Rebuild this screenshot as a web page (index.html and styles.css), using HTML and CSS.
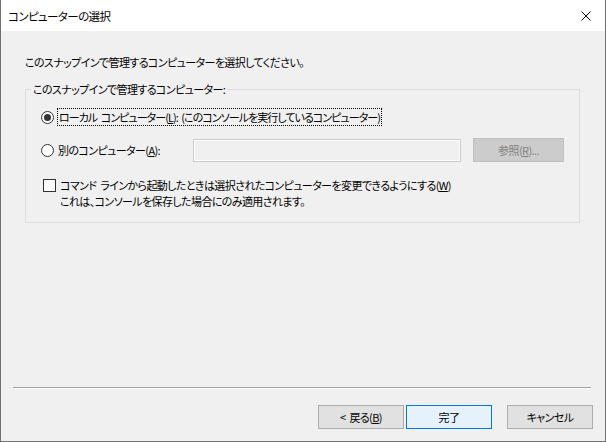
FILE: index.html
```html
<!DOCTYPE html>
<html lang="ja">
<head>
    <meta charset="UTF-8">
    <title>コンピューターの選択</title>
    <link rel="stylesheet" href="styles.css">
</head>
<body>
    <div class="window">
        <!-- タイトルバー -->
        <div class="titlebar">
            <span class="title">コンピューターの選択</span>
            <span class="close">
                <svg width="10" height="10" viewBox="0 0 10 10">
                    <path d="M0.5 0.5 L9.5 9.5 M9.5 0.5 L0.5 9.5" stroke="#000" stroke-width="1" fill="none"/>
                </svg>
            </span>
        </div>

        <div class="content">
            <p class="intro">このスナップインで管理するコンピューターを選択してください。</p>

            <fieldset class="group">
                <legend>このスナップインで管理するコンピューター:</legend>

                <div class="row row-local">
                    <span class="radio checked"></span>
                    <span class="label focus">ローカル コンピューター(<u>L</u>): (このコンソールを実行しているコンピューター)</span>
                </div>

                <div class="row row-other">
                    <span class="radio"></span>
                    <span class="label other-label">別のコンピューター(<u>A</u>):</span>
                    <span class="textbox"></span>
                    <span class="btn disabled">参照(<u>R</u>)...</span>
                </div>

                <div class="row row-check">
                    <span class="checkbox"></span>
                    <span class="label">コマンド ラインから起動したときは選択されたコンピューターを変更できるようにする(<u>W</u>)<br>これは、コンソールを保存した場合にのみ適用されます。</span>
                </div>
            </fieldset>

            <div class="footer">
                <div class="separator"></div>
                <div class="buttons">
                    <span class="btn">&lt; 戻る(<u>B</u>)</span>
                    <span class="btn default">完了</span>
                    <span class="btn cancel">キャンセル</span>
                </div>
            </div>
        </div>
    </div>
</body>
</html>
```

FILE: styles.css
```css
/* 全体 */
body {
    margin: 0;
    font-family: "Noto Sans CJK JP", "Noto Sans", sans-serif;
    font-size: 11px;
    letter-spacing: -0.6px;
    font-feature-settings: "palt";
    color: #000;
    background-color: #f0f0f0;
}

.window {
    width: 606px;
    height: 442px;
    box-sizing: border-box;
    border-left: 1px solid #707070;
    border-right: 1px solid #707070;
    border-bottom: 1px solid #707070;
    display: flex;
    flex-direction: column;
}

/* タイトルバー */
.titlebar {
    height: 31px;
    background-color: #fff;
    display: flex;
    align-items: center;
    justify-content: space-between;
    padding: 0 14px 0 7px;
    flex-shrink: 0;
}

.title {
    font-size: 11.5px;
    line-height: 16px;
}

.close {
    display: flex;
}

/* 本体 */
.content {
    flex: 1;
    display: flex;
    flex-direction: column;
    background-color: #f0f0f0;
    padding: 23px 0 0 24px;
}

.intro {
    margin: 0;
    line-height: 16px;
}

.group {
    margin: 11px 0 0 0;
    width: 555px;
    box-sizing: border-box;
    border: 1px solid #dcdcdc;
    padding: 11px 0 13px 15px;
    min-width: 0;
}

.group legend {
    padding: 0 2px;
    margin-left: -10px;
    line-height: 16px;
}

.row {
    display: flex;
    align-items: center;
}

.label {
    line-height: 16px;
    white-space: nowrap;
}

.row-local .label {
    margin-left: 3px;
}

.focus {
    border: 1px dotted #000;
    padding: 0 1px 0 1px;
    letter-spacing: -0.95px;
    word-spacing: 2px;
}

.row-other {
    margin-top: 12px;
    height: 24px;
}

.other-label {
    margin-left: 4px;
    width: 135px;
}

.textbox {
    width: 268px;
    height: 23px;
    box-sizing: border-box;
    border: 1px solid #cccccc;
    box-shadow: inset 0 0 0 1px #fff;
}

.row-check {
    margin-top: 15px;
    align-items: flex-start;
    padding-left: 2px;
}

.row-check .label {
    margin-left: 4px;
    word-spacing: 2px;
}

/* ラジオボタンとチェックボックス */
.radio {
    width: 13px;
    height: 13px;
    box-sizing: border-box;
    border: 1px solid #333;
    border-radius: 50%;
    background-color: #fff;
    display: flex;
    align-items: center;
    justify-content: center;
    flex-shrink: 0;
}

.radio.checked:after {
    content: '';
    width: 7px;
    height: 7px;
    border-radius: 50%;
    background-color: #333;
}

.checkbox {
    width: 13px;
    height: 13px;
    box-sizing: border-box;
    border: 1px solid #333;
    background-color: #fff;
    margin-top: 2px;
    flex-shrink: 0;
}

/* ボタン */
.btn {
    width: 86px;
    height: 24px;
    box-sizing: border-box;
    border: 1px solid #adadad;
    background-color: #e1e1e1;
    display: flex;
    align-items: center;
    justify-content: center;
    line-height: 16px;
    flex-shrink: 0;
    word-spacing: 2px;
}

.btn.disabled {
    width: 91px;
    margin-left: 12px;
    margin-top: -1px;
    background-color: #cccccc;
    border-color: #bfbfbf;
    color: #838383;
}

.btn.default {
    background-color: #e5f1fb;
    border-color: #0078d7;
}

/* フッター */
.footer {
    margin-top: auto;
    margin-left: -12px;
    padding: 0 12px 12px 0;
}

.separator {
    height: 0;
    border-top: 1px solid #a0a0a0;
    border-bottom: 1px solid #fff;
    margin-right: 2px;
}

.buttons {
    display: flex;
    justify-content: flex-end;
    gap: 2px;
    margin-top: 16px;
}

.btn.cancel {
    margin-left: 13px;
}
```
